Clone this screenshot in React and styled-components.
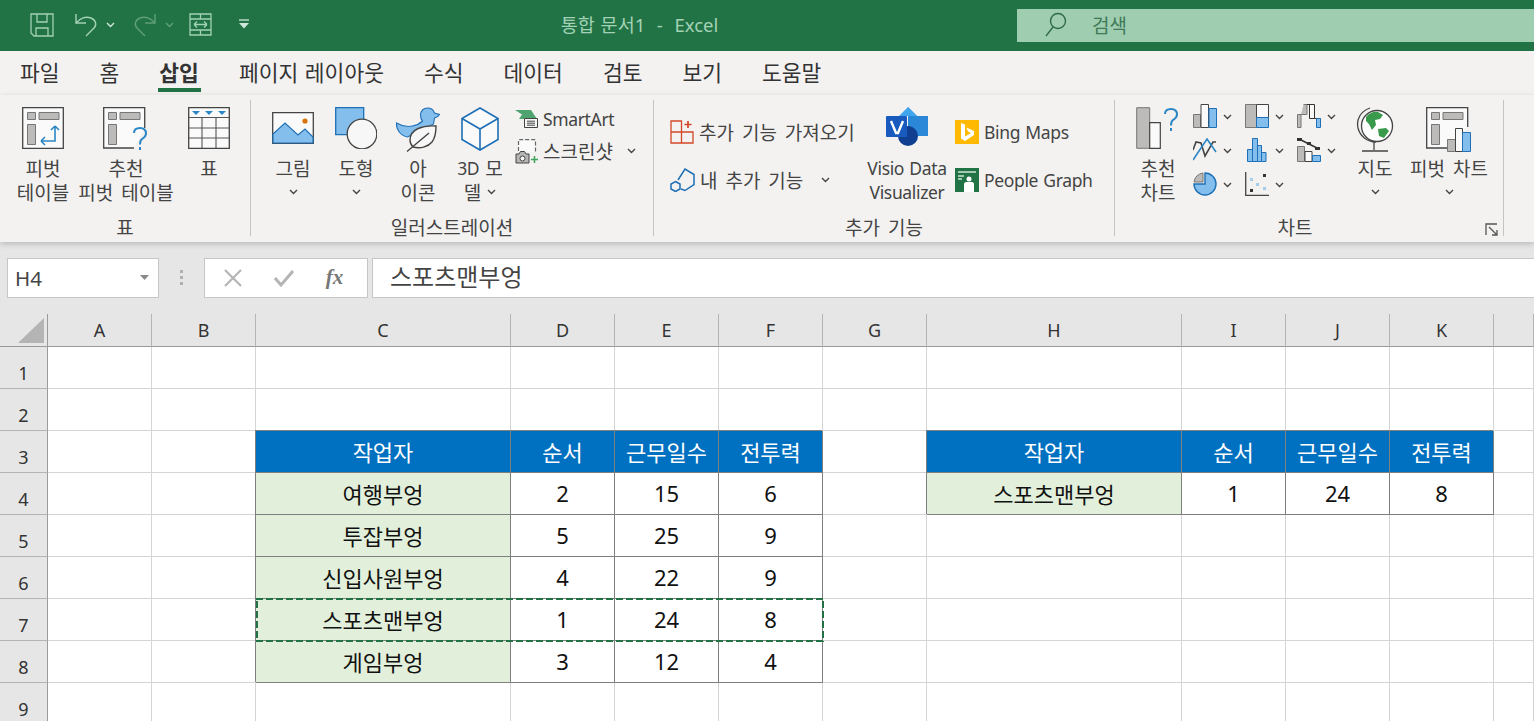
import React from 'react';
import styled, { createGlobalStyle } from 'styled-components';

const FONT = '"Noto Sans", "Noto Sans CJK KR", sans-serif';

const GlobalStyle = createGlobalStyle`
  html, body {
    margin: 0;
    height: 721px;
    overflow: hidden;
    background: #e6e6e6;
    font-family: ${FONT};
  }
`;

const Page = styled.div`
  display: flex;
  flex-direction: column;
  width: 1534px;
  height: 721px;
  overflow: hidden;
`;

/* title bar */
const TitleBar = styled.div`
  display: flex;
  align-items: center;
  flex: 0 0 51px;
  background: #217346;
`;

const Qat = styled.div`
  display: flex;
  align-items: center;
  flex: 0 0 250px;
  padding: 0 0 2px 30px;
  box-sizing: border-box;
`;

const QatChevron = styled.span`
  display: flex;
  margin: 0 ${p => p.$right}px 0 8px;
`;

const QatGap = styled.span`
  flex: 0 0 ${p => p.$w}px;
`;

const Title = styled.div`
  flex: 1;
  padding: 0 0 3px 12px;
  text-align: center;
  color: #a3d2b5;
  font-size: 18.5px;
  word-spacing: 1px;
`;

const SearchBox = styled.div`
  display: flex;
  align-items: center;
  gap: 24px;
  flex: 0 0 517px;
  height: 33px;
  padding: 0 0 2px 27px;
  box-sizing: border-box;
  background: #9ecdb0;
  color: #3f7a58;
  font-size: 19px;
`;

/* tabs */
const Tabs = styled.div`
  display: flex;
  gap: 40px;
  flex: 0 0 44px;
  padding-left: 20px;
  background: #f3f2f1;
`;

const Tab = styled.div`
  position: relative;
  padding-top: 7px;
  font-size: 21.5px;
  line-height: 30px;
  color: #333;
  word-spacing: 1px;
  white-space: nowrap;
  font-weight: ${p => (p.$active ? 700 : 400)};
  ${p =>
    p.$active &&
    `&::after {
      content: '';
      position: absolute;
      left: -1px;
      right: -2px;
      bottom: 3px;
      height: 4px;
      background: #217346;
    }`}
`;

/* ribbon */
const Ribbon = styled.div`
  display: flex;
  flex: 0 0 147px;
  padding: 5px 0 6px;
  box-sizing: border-box;
  background: #f3f2f1;
  color: #444;
  font-size: 19px;
  box-shadow: 0 2px 6px rgba(0, 0, 0, 0.2);
  position: relative;
  z-index: 1;
`;

const Group = styled.div`
  position: relative;
  display: flex;
  flex-direction: column;
  flex: 0 0 ${p => p.$w}px;
  box-sizing: border-box;
  border-right: ${p => (p.$open ? 'none' : '1px solid #c4c4c4')};
`;

const GroupBody = styled.div`
  display: flex;
  flex: 1;
  padding-left: ${p => p.$pad}px;
`;

const GroupLabel = styled.div`
  flex: 0 0 16px;
  line-height: 16px;
  text-align: center;
  white-space: nowrap;
  padding: 0 ${p => p.$right || 0}px 0 ${p => p.$left || 0}px;
  word-spacing: 3px;
`;

const BigButton = styled.div`
  display: flex;
  flex-direction: column;
  align-items: center;
  flex: 0 0 ${p => p.$w}px;
  padding-top: 7px;
  text-align: center;
  word-spacing: 3px;
  white-space: nowrap;
`;

const BigIcon = styled.div`
  display: flex;
  justify-content: center;
  height: 42px;
  margin-bottom: 7px;
`;

const LabelLine = styled.div`
  display: flex;
  align-items: center;
  justify-content: center;
  gap: 6px;
  height: 24px;
`;

const Latin = styled.span`
  font-size: 17.5px;
  letter-spacing: -0.35px;
  word-spacing: 1px;
`;

const SmallColumn = styled.div`
  display: flex;
  flex-direction: column;
  flex: 0 0 ${p => p.$w}px;
  margin-left: ${p => p.$left || 0}px;
  padding-top: ${p => p.$top}px;
`;

const SmallRow = styled.div`
  display: flex;
  align-items: center;
  gap: 5px;
  height: ${p => p.$h}px;
  white-space: nowrap;
  word-spacing: 3px;
`;

const MiniGrid = styled.div`
  display: grid;
  grid-template-columns: repeat(3, 52px);
  grid-auto-rows: 34px;
  flex: 0 0 156px;
  padding-top: 4px;
`;

const MiniCell = styled.div`
  display: flex;
  align-items: flex-start;
  gap: 6px;
`;

const MiniChevron = styled.span`
  display: flex;
  margin-top: 10px;
`;

const Launcher = styled.div`
  position: absolute;
  right: 5px;
  bottom: 0;
  display: flex;
`;

const ButtonGap = styled.span`
  flex: 0 0 ${p => p.$w}px;
`;

/* formula bar */
const FormulaBar = styled.div`
  display: flex;
  align-items: center;
  flex: 0 0 72px;
  padding: 0 0 1px 7px;
  box-sizing: border-box;
  background: #e6e6e6;
`;

const NameBox = styled.div`
  display: flex;
  align-items: center;
  justify-content: space-between;
  flex: 0 0 152px;
  height: 40px;
  padding: 0 9px 0 7px;
  box-sizing: border-box;
  background: #fff;
  border: 1px solid #c6c6c6;
  color: #444;
  font-size: 20.5px;
`;

const Grip = styled.div`
  display: flex;
  flex-direction: column;
  gap: 3px;
  margin: 0 21px;
  & > i {
    display: block;
    width: 3px;
    height: 3px;
    background: #b0b0b0;
  }
`;

const FxBox = styled.div`
  display: flex;
  align-items: center;
  justify-content: space-around;
  flex: 0 0 164px;
  height: 40px;
  padding: 0 8px 0 2px;
  box-sizing: border-box;
  background: #fff;
  border: 1px solid #c6c6c6;
`;

const FxText = styled.span`
  font-family: 'Liberation Serif', serif;
  font-style: italic;
  font-weight: 700;
  font-size: 21px;
  color: #777;
`;

const FormulaInput = styled.div`
  flex: 1;
  height: 40px;
  margin-left: 4px;
  padding-left: 17px;
  box-sizing: border-box;
  background: #fff;
  border: 1px solid #c6c6c6;
  border-right: none;
  font-size: 24px;
  line-height: 35px;
  color: #444;
`;

/* sheet */
const Sheet = styled.div`
  position: relative;
  display: grid;
  grid-template-columns: 48px 104px 104px 255px repeat(4, 104px) 255px repeat(3, 104px) 40px;
  grid-template-rows: 33px;
  grid-auto-rows: 42px;
  flex: 1;
  background: #fff;
  overflow: hidden;
  font-size: 22px;
  color: #111;
`;

const Corner = styled.div`
  position: relative;
  background: #e6e6e6;
  border-right: 1px solid #9a9a9a;
  border-bottom: 1px solid #9a9a9a;
  &::after {
    content: '';
    position: absolute;
    right: 3px;
    bottom: 3px;
    border-style: solid;
    border-width: 0 0 25px 26px;
    border-color: transparent transparent #b4b4b4 transparent;
  }
`;

const ColHead = styled.div`
  display: flex;
  align-items: center;
  justify-content: center;
  box-sizing: border-box;
  background: #e6e6e6;
  border-right: 1px solid #b4b4b4;
  border-bottom: 1px solid #9a9a9a;
  font-size: 18px;
  color: #333;
`;

const RowHead = styled.div`
  display: flex;
  align-items: flex-end;
  justify-content: center;
  padding-bottom: 1px;
  box-sizing: border-box;
  background: #e6e6e6;
  border-right: 1px solid #9a9a9a;
  border-bottom: 1px solid #b4b4b4;
  font-size: 18px;
  line-height: 28px;
  color: #333;
`;

const Cell = styled.div`
  display: flex;
  align-items: center;
  justify-content: center;
  padding-bottom: 2px;
  box-sizing: border-box;
  border-right: 1px solid #d4d4d4;
  border-bottom: 1px solid #d4d4d4;
`;

const DataCell = styled(Cell)`
  background: ${p => (p.$head ? '#0070c0' : p.$name ? '#e2efda' : '#fff')};
  color: ${p => (p.$head ? '#fff' : '#111')};
  border-right-color: #7f7f7f;
  border-bottom-color: #7f7f7f;
  box-shadow: -1px -1px 0 #7f7f7f;
`;

const CopyAnts = styled.div`
  position: absolute;
  grid-column: 4 / 8;
  grid-row: 8 / 9;
  top: -1px;
  left: 0;
  right: -1px;
  bottom: -1px;
  background:
    linear-gradient(90deg, #217346 72%, transparent 0) top left / 10px 2px repeat-x,
    linear-gradient(90deg, #217346 72%, transparent 0) bottom left / 10px 2px repeat-x,
    linear-gradient(0deg, #217346 72%, transparent 0) top left / 2px 10px repeat-y,
    linear-gradient(0deg, #217346 72%, transparent 0) top right / 2px 10px repeat-y;
`;

/* icons */
const BLUE = '#83beec';
const DARK_BLUE = '#1e6fb5';
const GREY = '#bdbbb9';
const GREY_LINE = '#777';
const INK = '#444';

const Chevron = ({ color = INK }) => (
  <svg width="9" height="6" viewBox="0 0 9 6">
    <path d="M1 1l3.500 3.500L8 1" fill="none" stroke={color} strokeWidth="1.400" />
  </svg>
);

const SaveIcon = () => (
  <svg width="24" height="24" viewBox="0 0 24 24" fill="none" stroke="#a3d2b5" strokeWidth="1.300">
    <path d="M1 1h22v22H4l-3-3z" />
    <path d="M7 1v8h10V1M6 23v-8h12v8" />
  </svg>
);

const UndoIcon = ({ color, flip }) => (
  <svg width="24" height="24" viewBox="0 0 24 24" fill="none" stroke={color} strokeWidth="1.400" style={flip ? { transform: 'scaleX(-1)' } : undefined}>
    <path d="M2 1v9h10" />
    <path d="M2 10C6 5 12 3 17 5c5 2 6 7 3 10l-8 8" />
  </svg>
);

const FormIcon = () => (
  <svg width="23" height="23" viewBox="0 0 23 23" fill="none" stroke="#a3d2b5" strokeWidth="1.300">
    <path d="M1 1h21v21H1zM1 6h21M1 17h21M11.500 1v5M11.500 17v5M5 11.500h13M5 11.500l3-3M5 11.500l3 3M18 11.500l-3-3M18 11.500l-3 3" />
  </svg>
);

const QatMore = () => (
  <svg width="12" height="11" viewBox="0 0 12 11">
    <path d="M1 1h10" stroke="#cfe6d8" strokeWidth="1.300" />
    <path d="M1 4h10l-5 5.500z" fill="#cfe6d8" />
  </svg>
);

const SearchIcon = () => (
  <svg width="24" height="26" viewBox="0 0 24 26" fill="none" stroke="#2f6b49" strokeWidth="1.400">
    <circle cx="14" cy="9" r="7.500" />
    <path d="M9 15L2 24" />
  </svg>
);

const HelpMark = ({ x, y }) => (
  <path
    transform={`translate(${x} ${y})`}
    d="M1 6C1 3 3 1 7 1s6 2.500 6 5.500-2 4-4 5.500-2 3-2 5.500M7 20v3"
    fill="none"
    stroke="#2b86c5"
    strokeWidth="2"
  />
);

const PivotPanes = () => (
  <path d="M5.500 5.500h8v7h-8zM17 5.500h20v7H17zM5.500 17.500h8v20h-8z" fill={GREY} stroke={GREY_LINE} />
);

const PivotTableIcon = () => (
  <svg width="42" height="42" viewBox="0 0 42 42">
    <path d="M.700.700h40.600v40.600H.700z" fill="#fafafa" stroke={INK} strokeWidth="1.300" />
    <PivotPanes />
    <path d="M19 34h14V19M19 34l4-4M19 34l4 4M33 19l-4 4M33 19l4 4" fill="none" stroke="#2b86c5" strokeWidth="1.600" />
  </svg>
);

const RecommendedPivotIcon = () => (
  <svg width="46" height="44" viewBox="0 0 46 44">
    <path d="M31 41H.700V.700h41V21" fill="#fafafa" stroke={INK} strokeWidth="1.300" />
    <PivotPanes />
    <HelpMark x={30} y={20} />
  </svg>
);

const TableIcon = () => (
  <svg width="42" height="42" viewBox="0 0 42 42">
    <path d="M.700.700h40.600v40.600H.700z" fill="#fafafa" stroke={INK} strokeWidth="1.300" />
    <path d="M1 10.500h40M1 21h40M1 31h40M14 10v31M28 10v31" stroke="#555" strokeWidth="1.100" />
    <path d="M4 4h8l-4 4zM17 4h8l-4 4zM30 4h8l-4 4z" fill="#2b86c5" />
  </svg>
);

const PictureIcon = () => (
  <svg width="42" height="42" viewBox="0 0 42 42">
    <path d="M.700 5.700h40.600v30.600H.700z" fill="#fafafa" stroke={INK} strokeWidth="1.300" />
    <path d="M1 27l12-11 13 12 7-6 8 8v6H1z" fill={BLUE} stroke={DARK_BLUE} strokeWidth="1.100" />
    <circle cx="33" cy="14" r="2.600" fill="#d9730d" />
  </svg>
);

const ShapesIcon = () => (
  <svg width="42" height="42" viewBox="0 0 42 42">
    <path d="M.700.700h28v27h-28z" fill={BLUE} stroke={DARK_BLUE} strokeWidth="1.300" />
    <circle cx="27" cy="27" r="14.800" fill="#f7f7f7" stroke={INK} strokeWidth="1.300" />
  </svg>
);

const IconsIcon = () => (
  <svg width="44" height="46" viewBox="0 1 44 46">
    <path
      d="M.500 17c5 3 11 4 16 3 5-1 8-3 10-5-2-2-2-5-2-6 0-4 3-7 7-7 4 0 6 2 7 5l5 1.500c-1 2-3 3-5 3.500l-1 6-26 13C5 30 0 24 .500 17z"
      fill={BLUE}
      stroke={DARK_BLUE}
      strokeWidth="1.100"
    />
    <path d="M40 20C27 19 14 23 14 34c0 3 1 5 3 7 7 2 15 0 19-5 3-4 4-10 4-16z" fill="#f7f7f7" stroke={INK} strokeWidth="1.400" />
    <path d="M11 45.500L33 27" fill="none" stroke={INK} strokeWidth="1.400" />
  </svg>
);

const CubeIcon = () => (
  <svg width="40" height="44" viewBox="0 0 40 44" fill="#fafafa" stroke={DARK_BLUE} strokeWidth="1.600">
    <path d="M20 1l18 10.500v21L20 43 2 32.500v-21z" />
    <path d="M2 11.500L20 22l18-10.500M20 22v21" fill="none" />
  </svg>
);

const SmartArtIcon = () => (
  <svg width="23" height="19" viewBox="0 0 23 19">
    <path d="M0 0h16l6 9H4l3-4.500z" fill="#4fa36f" />
    <path d="M9.500 8.500h13v9h-13z" fill="#f7f7f7" stroke={INK} />
    <path d="M12 11.200h8M12 13.200h8M12 15.200h8" stroke={INK} />
  </svg>
);

const ScreenshotIcon = () => (
  <svg width="23" height="25" viewBox="0 0 23 25">
    <path d="M3.500 12V.700h17V13" fill="#fafafa" stroke="#666" strokeWidth="1.200" strokeDasharray="4 2" />
    <path d="M1 15h3l1.500-2.500h4L11 15h3v9H1z" fill="#b5b5b5" stroke={INK} />
    <circle cx="7.500" cy="19.500" r="2.500" fill="#f7f7f7" stroke={INK} />
    <path d="M19.500 17v7M16 20.500h7" stroke="#3fa35c" strokeWidth="1.500" />
  </svg>
);

const GetAddinIcon = () => (
  <svg width="24" height="24" viewBox="0 0 24 24" fill="none" stroke="#d24726" strokeWidth="1.300">
    <path d="M1 1h10.500v22H1zM1 12h22v11H11.500" />
    <path d="M18 1v7M14.500 4.500h7" strokeWidth="1.700" />
  </svg>
);

const MyAddinIcon = () => (
  <svg width="25" height="24" viewBox="0 0 25 24" fill="none" stroke={DARK_BLUE} strokeWidth="1.500">
    <path d="M8 12L15 1l9 5.500v10L15 22.500l-4-1.500" />
    <path d="M5.500 13.500l4.500 2.500v5l-4.500 2.500L1 21v-5z" />
  </svg>
);

const VisioIcon = () => (
  <svg width="42" height="40" viewBox="0 0 42 40">
    <path d="M22 0l9 9h11v20H22z" fill="#2b88d8" />
    <path d="M22 0l9 9H13z" fill="#41a5ee" />
    <circle cx="22" cy="29" r="10" fill="#103f91" />
    <path d="M1 9h19a1 1 0 011 1v20H1a1 1 0 01-1-1V10a1 1 0 011-1z" fill="#185abd" />
    <path d="M5 14l5 12h2l5-12" fill="none" stroke="#fff" strokeWidth="2.400" />
  </svg>
);

const BingIcon = () => (
  <svg width="24" height="24" viewBox="0 0 24 24">
    <path d="M0 0h24v24H0z" fill="#ffb900" />
    <path d="M6 3l4 1.500v12l6-3.500-3-1.500-1.500-4L19 11v4l-9 6-4-2.500z" fill="#fff" />
  </svg>
);

const PeopleIcon = () => (
  <svg width="24" height="24" viewBox="0 0 24 24">
    <path d="M0 0h24v24H0z" fill="#217346" />
    <path d="M3 4h18M3 8h6M3 11h4" stroke="#cfe6d8" strokeWidth="1.500" />
    <circle cx="14" cy="11" r="2.500" fill="#fff" />
    <path d="M9 24v-8c0-1 1-2 2-2h6c1 0 2 1 2 2v8z" fill="#fff" />
  </svg>
);

const RecChartIcon = () => (
  <svg width="44" height="42" viewBox="0 0 44 42">
    <path d="M.700.700h13v40.600H.700z" fill={GREY} stroke={GREY_LINE} />
    <path d="M13.700 15.700h10.600v25.600H13.700z" fill="#fafafa" stroke={INK} strokeWidth="1.200" />
    <HelpMark x={28} y={1} />
  </svg>
);

const ColumnMini = () => (
  <svg width="24" height="24" viewBox="0 0 24 24" stroke={INK}>
    <path d="M.500 10.500h7v13h-7z" fill={GREY} stroke={GREY_LINE} />
    <path d="M8 .500h7.500v23H8z" fill="#fafafa" />
    <path d="M16 4.500h7.500v19H16z" fill={BLUE} stroke={DARK_BLUE} />
  </svg>
);

const LineMini = () => (
  <svg width="24" height="24" viewBox="0 0 24 24" fill="none" strokeWidth="1.600">
    <path d="M0 12L3 4l5 1 4 13 8-14h3" stroke={INK} />
    <path d="M0 22L14 1l9 13" stroke="#2b86c5" />
  </svg>
);

const PieMini = () => (
  <svg width="24" height="24" viewBox="0 0 24 24">
    <path d="M10 1a11 11 0 00-9 9h9z" fill={GREY} stroke={GREY_LINE} />
    <path d="M12 1a11 11 0 11-11 11h11z" fill={BLUE} stroke={DARK_BLUE} strokeWidth="1.400" />
  </svg>
);

const TreemapMini = () => (
  <svg width="24" height="24" viewBox="0 0 24 24">
    <path d="M.500.500h11v23h-11z" fill={GREY} stroke={GREY_LINE} />
    <path d="M11.500.500h12v13h-12z" fill="#fafafa" stroke={INK} />
    <path d="M11.500 13.500h12v10h-12z" fill={BLUE} stroke={DARK_BLUE} />
  </svg>
);

const HistogramMini = () => (
  <svg width="24" height="24" viewBox="0 0 24 24" stroke={DARK_BLUE}>
    <path d="M2.500 11.500h5v12h-5z" fill={BLUE} />
    <path d="M7.500.500h5v23h-5z" fill={BLUE} />
    <path d="M12.500 7.500h4v16h-4z" fill={BLUE} />
    <path d="M16.500 14.500h4.500v9h-4.500z" fill={BLUE} />
  </svg>
);

const ScatterMini = () => (
  <svg width="24" height="24" viewBox="0 0 24 24">
    <path d="M.700 0v23.300H24" fill="none" stroke={INK} strokeWidth="1.300" />
    <path d="M18 2h3v3h-3zM5 17h3v3H5z" fill="#333" />
    <path d="M5 6h3v3H5zM11 11h3v3h-3zM18 15h3v3h-3z" fill="#a6cdea" />
  </svg>
);

const WaterfallMini = () => (
  <svg width="24" height="24" viewBox="0 0 24 24">
    <path d="M.500 10.500h3.500v13H.500zM6.500.500H10v10H4" fill={GREY} stroke={GREY_LINE} />
    <path d="M12.500.500h5v14h-5zM10 .500h3M17.500 14.500h6" fill="#fafafa" stroke="#333" />
    <path d="M19.500 14.500h4v9h-4z" fill={BLUE} stroke={DARK_BLUE} />
  </svg>
);

const ComboMini = () => (
  <svg width="24" height="24" viewBox="0 0 24 24">
    <path d="M.500 8.500h7v15h-7z" fill={GREY} stroke={GREY_LINE} />
    <path d="M8 13.500h7v10H8z" fill="#fafafa" stroke={INK} />
    <path d="M15.500 17.500h8v6h-8z" fill={BLUE} stroke={DARK_BLUE} />
    <path d="M2 1l20 10" fill="none" stroke="#333" strokeWidth="1.500" />
    <path d="M0 0h5v3H0zM10 4h4v3h-4zM18 9h5v3h-5z" fill="#333" />
  </svg>
);

const GlobeIcon = () => (
  <svg width="38" height="46" viewBox="0 0 38 46">
    <circle cx="21" cy="19" r="15.500" fill="#fff" stroke={INK} strokeWidth="1.300" />
    <path d="M10 10c3-4 8-6 12-5l5 3-3 4-5 1 1 5-4 5-3-6-3-3zM22 22l8-1 3 3-5 7-5-2z" fill="#3a9a4c" />
    <path d="M14 1C5 4 0 12 2 21c2 8 9 14 18 14" fill="none" stroke={INK} strokeWidth="1.300" />
    <path d="M18 35v8M6 44h26" fill="none" stroke={INK} strokeWidth="1.300" />
  </svg>
);

const PivotChartIcon = () => (
  <svg width="46" height="46" viewBox="0 0 46 46">
    <path d="M21 41H.700V.700h41V20" fill="#fafafa" stroke={INK} strokeWidth="1.300" />
    <PivotPanes />
    <path d="M21.500 32.500h8v12h-8z" fill={GREY} stroke={GREY_LINE} />
    <path d="M29.500 21.500h7v23h-7z" fill="#fafafa" stroke={INK} />
    <path d="M36.500 25.500h8v19h-8z" fill={BLUE} stroke={DARK_BLUE} />
  </svg>
);

const LauncherIcon = () => (
  <svg width="13" height="13" viewBox="0 0 13 13" fill="none" stroke="#555" strokeWidth="1.300">
    <path d="M1 12V1h11" />
    <path d="M4 4l8 8M12 7v5H7" />
  </svg>
);

const CutOffIcon = () => (
  <svg width="24" height="42" viewBox="0 0 24 42" fill="#fafafa" stroke="#555" strokeWidth="1.300">
    <path d="M5 10L12 6h12v30H12l-7-4z" />
  </svg>
);

const CloseIcon = () => (
  <svg width="20" height="20" viewBox="0 0 20 20" stroke="#b5b5b5" strokeWidth="2.200">
    <path d="M2 2l16 16M18 2L2 18" />
  </svg>
);

const CheckIcon = () => (
  <svg width="20" height="18" viewBox="0 0 20 18" fill="none" stroke="#b5b5b5" strokeWidth="3">
    <path d="M1 9l6 7L19 2" />
  </svg>
);

const MINI_ICONS = [
  ColumnMini, TreemapMini, WaterfallMini,
  LineMini, HistogramMini, ComboMini,
  PieMini, ScatterMini, null,
];

const COLUMNS = ['A', 'B', 'C', 'D', 'E', 'F', 'G', 'H', 'I', 'J', 'K', ''];
const HEADERS = ['작업자', '순서', '근무일수', '전투력'];
const WORKERS = [
  ['여행부엉', 2, 15, 6],
  ['투잡부엉', 5, 25, 9],
  ['신입사원부엉', 4, 22, 9],
  ['스포츠맨부엉', 1, 24, 8],
  ['게임부엉', 3, 12, 4],
];
const TABS = ['파일', '홈', '삽입', '페이지 레이아웃', '수식', '데이터', '검토', '보기', '도움말'];

// what sits in a sheet row, columns A to L
const rowContent = row => {
  const cells = Array(12).fill(null);
  const put = (start, values, isHead) =>
    values.forEach((value, i) => {
      cells[start + i] = { value, head: isHead, name: !isHead && i === 0 };
    });
  if (row === 3) {
    put(2, HEADERS, true);
    put(7, HEADERS, true);
  }
  if (row >= 4 && row <= 8) put(2, WORKERS[row - 4], false);
  if (row === 4) put(7, WORKERS[3], false);
  return cells;
};

export default function App() {
  return (
    <Page>
      <GlobalStyle />
      <TitleBar>
        <Qat>
          <SaveIcon />
          <QatGap $w={20} />
          <UndoIcon color="#a3d2b5" />
          <QatChevron $right={18}><Chevron color="#cfe6d8" /></QatChevron>
          <UndoIcon color="#5f9f7a" flip />
          <QatChevron $right={15}><Chevron color="#5f9f7a" /></QatChevron>
          <FormIcon />
          <QatGap $w={26} />
          <QatMore />
        </Qat>
        <Title>통합 문서1 &nbsp;-&nbsp; Excel</Title>
        <SearchBox>
          <SearchIcon />
          검색
        </SearchBox>
      </TitleBar>

      <Tabs>
        {TABS.map(tab => (
          <Tab key={tab} $active={tab === '삽입'}>{tab}</Tab>
        ))}
      </Tabs>

      <Ribbon>
        <Group $w={251}>
          <GroupBody $pad={8}>
            <BigButton $w={70}>
              <BigIcon><PivotTableIcon /></BigIcon>
              <LabelLine>피벗</LabelLine>
              <LabelLine>테이블</LabelLine>
            </BigButton>
            <BigButton $w={96}>
              <BigIcon><RecommendedPivotIcon /></BigIcon>
              <LabelLine>추천</LabelLine>
              <LabelLine>피벗 테이블</LabelLine>
            </BigButton>
            <BigButton $w={70}>
              <BigIcon><TableIcon /></BigIcon>
              <LabelLine>표</LabelLine>
            </BigButton>
          </GroupBody>
          <GroupLabel>표</GroupLabel>
        </Group>

        <Group $w={403}>
          <GroupBody $pad={11}>
            <BigButton $w={62}>
              <BigIcon><PictureIcon /></BigIcon>
              <LabelLine>그림</LabelLine>
              <LabelLine><Chevron /></LabelLine>
            </BigButton>
            <BigButton $w={64}>
              <BigIcon><ShapesIcon /></BigIcon>
              <LabelLine>도형</LabelLine>
              <LabelLine><Chevron /></LabelLine>
            </BigButton>
            <BigButton $w={60}>
              <BigIcon><IconsIcon /></BigIcon>
              <LabelLine>아</LabelLine>
              <LabelLine>이콘</LabelLine>
            </BigButton>
            <BigButton $w={64}>
              <BigIcon><CubeIcon /></BigIcon>
              <LabelLine><Latin>3D</Latin> 모</LabelLine>
              <LabelLine>델 <Chevron /></LabelLine>
            </BigButton>
            <SmallColumn $w={130} $left={3} $top={3}>
              <SmallRow $h={32}><SmartArtIcon /><Latin>SmartArt</Latin></SmallRow>
              <SmallRow $h={32}><ScreenshotIcon />스크린샷<ButtonGap $w={4} /><Chevron /></SmallRow>
            </SmallColumn>
          </GroupBody>
          <GroupLabel>일러스트레이션</GroupLabel>
        </Group>

        <Group $w={461}>
          <GroupBody $pad={16}>
            <SmallColumn $w={195} $top={8}>
              <SmallRow $h={48}><GetAddinIcon />추가 기능 가져오기</SmallRow>
              <SmallRow $h={48}><MyAddinIcon />내 추가 기능<ButtonGap $w={8} /><Chevron /></SmallRow>
            </SmallColumn>
            <BigButton $w={84}>
              <BigIcon><VisioIcon /></BigIcon>
              <LabelLine><Latin>Visio Data</Latin></LabelLine>
              <LabelLine><Latin>Visualizer</Latin></LabelLine>
            </BigButton>
            <SmallColumn $w={150} $left={6} $top={8}>
              <SmallRow $h={48}><BingIcon /><Latin>Bing Maps</Latin></SmallRow>
              <SmallRow $h={48}><PeopleIcon /><Latin>People Graph</Latin></SmallRow>
            </SmallColumn>
          </GroupBody>
          <GroupLabel>추가 기능</GroupLabel>
        </Group>

        <Group $w={389}>
          <GroupBody $pad={8}>
            <BigButton $w={70}>
              <BigIcon><RecChartIcon /></BigIcon>
              <LabelLine>추천</LabelLine>
              <LabelLine>차트</LabelLine>
            </BigButton>
            <MiniGrid>
              {MINI_ICONS.map((Mini, i) => (
                <MiniCell key={i}>
                  {Mini && <Mini />}
                  {Mini && <MiniChevron><Chevron /></MiniChevron>}
                </MiniCell>
              ))}
            </MiniGrid>
            <BigButton $w={52}>
              <BigIcon><GlobeIcon /></BigIcon>
              <LabelLine>지도</LabelLine>
              <LabelLine><Chevron /></LabelLine>
            </BigButton>
            <BigButton $w={96}>
              <BigIcon><PivotChartIcon /></BigIcon>
              <LabelLine>피벗 차트</LabelLine>
              <LabelLine><Chevron /></LabelLine>
            </BigButton>
          </GroupBody>
          <GroupLabel $right={28}>차트</GroupLabel>
          <Launcher><LauncherIcon /></Launcher>
        </Group>

        <Group $w={30} $open>
          <GroupBody $pad={22}>
            <BigButton $w={40}>
              <BigIcon><CutOffIcon /></BigIcon>
              <LabelLine>&nbsp;</LabelLine>
              <LabelLine>달</LabelLine>
            </BigButton>
          </GroupBody>
          <GroupLabel $left={52}>트</GroupLabel>
        </Group>
      </Ribbon>

      <FormulaBar>
        <NameBox>
          H4
          <svg width="9" height="5" viewBox="0 0 9 5"><path d="M0 0h9L4.500 5z" fill="#888" /></svg>
        </NameBox>
        <Grip><i /><i /><i /></Grip>
        <FxBox>
          <CloseIcon />
          <CheckIcon />
          <FxText>fx</FxText>
        </FxBox>
        <FormulaInput>스포츠맨부엉</FormulaInput>
      </FormulaBar>

      <Sheet>
        <Corner />
        {COLUMNS.map((col, i) => (
          <ColHead key={i}>{col}</ColHead>
        ))}
        {[1, 2, 3, 4, 5, 6, 7, 8, 9].map(row => (
          <React.Fragment key={row}>
            <RowHead>{row}</RowHead>
            {rowContent(row).map((cell, i) =>
              cell ? (
                <DataCell key={i} $head={cell.head} $name={cell.name}>{cell.value}</DataCell>
              ) : (
                <Cell key={i} />
              )
            )}
          </React.Fragment>
        ))}
        <CopyAnts />
      </Sheet>
    </Page>
  );
}
